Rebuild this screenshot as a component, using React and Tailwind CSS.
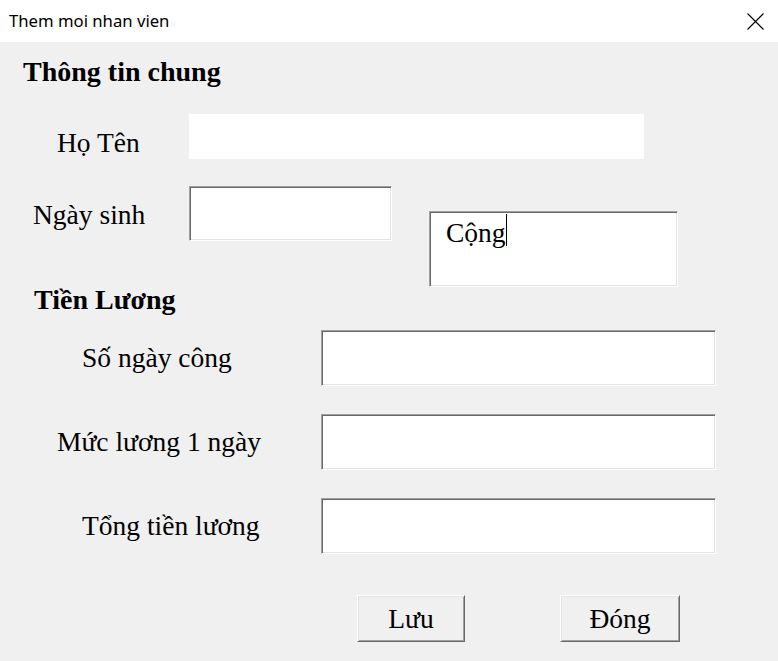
import React from "react";

const serif = { fontFamily: '"Liberation Serif", "Times New Roman", serif' };

const sunken =
  "bg-white border border-t-[#a0a0a0] border-l-[#a0a0a0] border-b-white border-r-white shadow-[inset_1px_1px_0_#696969,inset_-1px_-1px_0_#e3e3e3]";
const raised =
  "bg-[#f0f0f0] border border-t-white border-l-white border-b-[#696969] border-r-[#696969] shadow-[inset_1px_1px_0_#e3e3e3,inset_-1px_-1px_0_#a0a0a0] flex items-center justify-center text-[27.5px] leading-none text-black";

export default function App() {
  return (
    <div className="w-[778px] h-[661px] overflow-hidden bg-[#f0f0f0]">
      <div className="h-[42px] bg-white flex items-center justify-between pl-[9px] pr-[14px]">
        <span className="text-[16.7px] text-black leading-none" style={{ fontFamily: '"Noto Sans", sans-serif' }}>
          Them moi nhan vien
        </span>
        <svg width="17" height="17" viewBox="0 0 17 17" className="block">
          <path d="M0.5 0.5 L16.5 16.5 M16.5 0.5 L0.5 16.5" stroke="#000" strokeWidth="1.1" fill="none" />
        </svg>
      </div>
      <div className="h-[619px] flex flex-col text-black" style={serif}>
        <div className="mt-[16px] ml-[23px] h-[28px] text-[28px] font-bold leading-none">Thông tin chung</div>

        <div className="mt-[28px] flex items-start">
          <div className="w-[189px] pl-[57px] pt-[15px] text-[27.5px] leading-none">Họ Tên</div>
          <div className="w-[455px] h-[45px] bg-white" />
        </div>

        <div className="mt-[27px] flex items-start h-[55px]">
          <div className="w-[189px] pl-[33px] pt-[15px] text-[27.5px] leading-none">Ngày sinh</div>
          <div className={`w-[203px] h-[55px] ${sunken}`} />
          <div className={`ml-[37px] mt-[25px] w-[249px] h-[76px] shrink-0 ${sunken} pl-[16px] pt-[7px]`}>
            <div className="flex items-start text-[27.5px] leading-none">
              <span>Cộng</span>
              <span className="block w-px h-[32px] bg-black -mt-[5px]" />
            </div>
          </div>
        </div>

        <div className="mt-[45px] ml-[34px] h-[28px] text-[28px] font-bold leading-none">Tiền Lương</div>

        <div className="mt-[16px] flex items-start">
          <div className="w-[321px] pl-[82px] pt-[14px] text-[27.5px] leading-none">Số ngày công</div>
          <div className={`w-[395px] h-[56px] ${sunken}`} />
        </div>

        <div className="mt-[28px] flex items-start">
          <div className="w-[321px] pl-[57px] pt-[14px] text-[27.5px] leading-none">Mức lương 1 ngày</div>
          <div className={`w-[395px] h-[56px] ${sunken}`} />
        </div>

        <div className="mt-[28px] flex items-start">
          <div className="w-[321px] pl-[82px] pt-[14px] text-[27.5px] leading-none">Tổng tiền lương</div>
          <div className={`w-[395px] h-[56px] ${sunken}`} />
        </div>

        <div className="mt-[41px] flex items-start">
          <div className={`ml-[357px] w-[108px] h-[47px] ${raised}`}>Lưu</div>
          <div className={`ml-[95px] w-[120px] h-[47px] ${raised}`}>Đóng</div>
        </div>
      </div>
    </div>
  );
}
